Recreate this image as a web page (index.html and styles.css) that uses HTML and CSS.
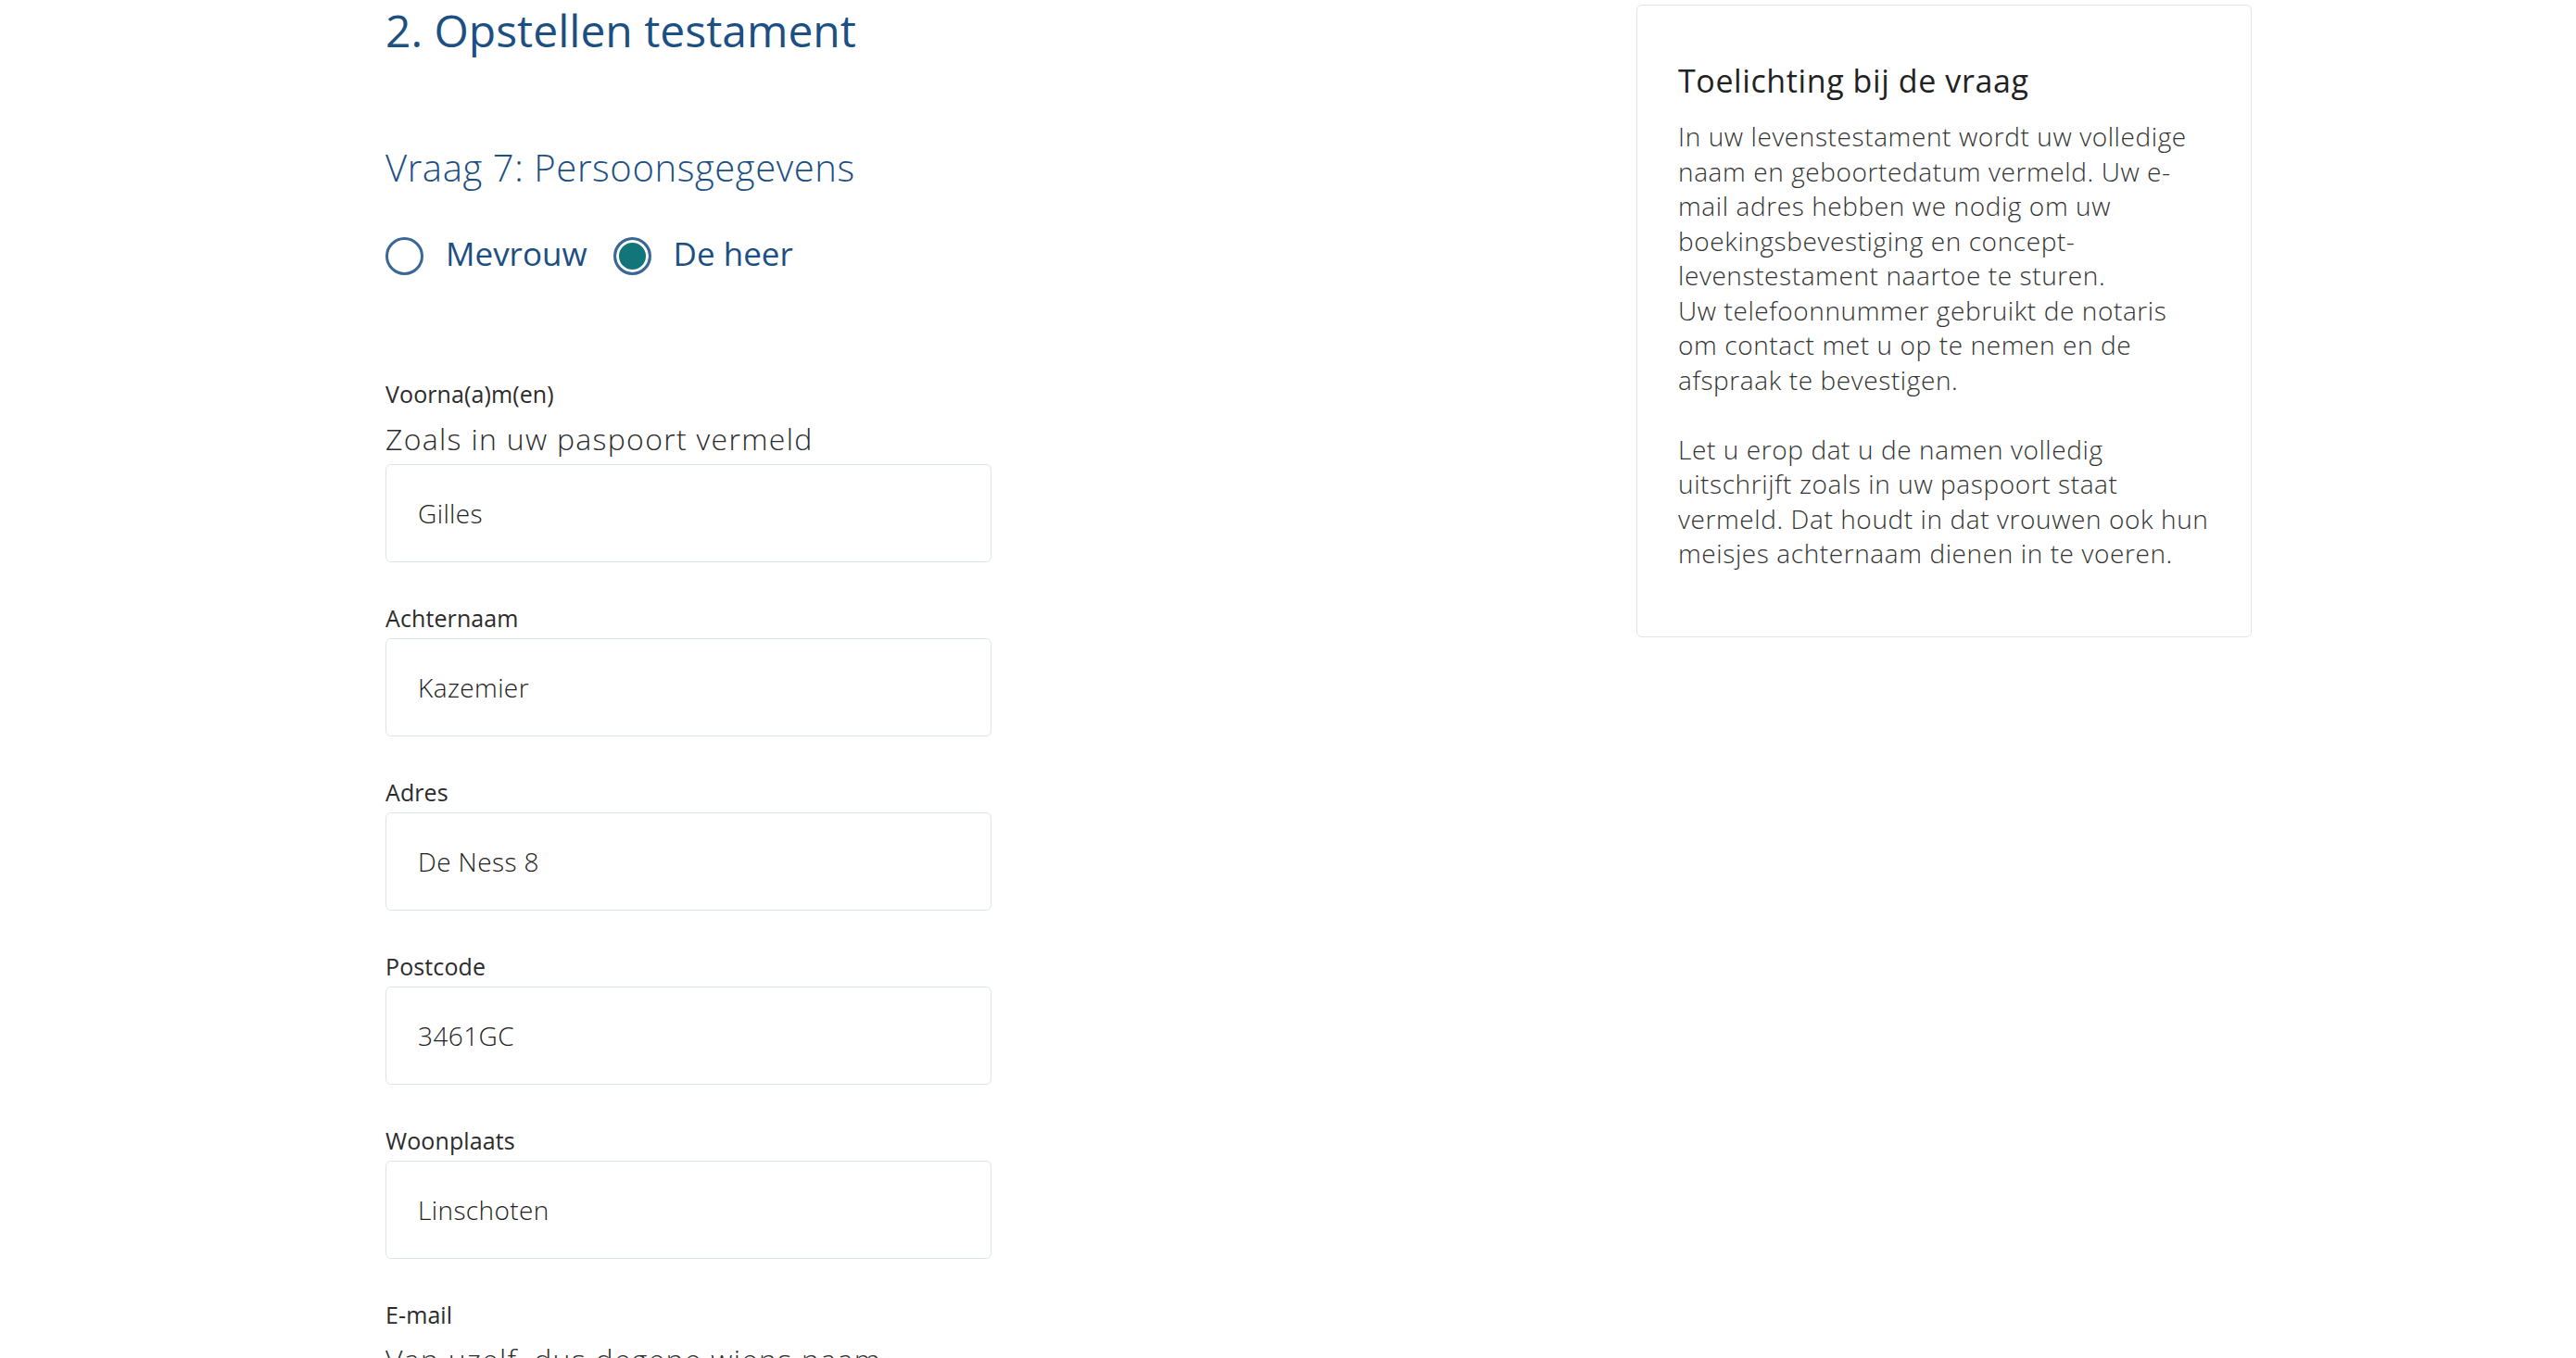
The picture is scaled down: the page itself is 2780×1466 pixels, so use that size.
FILE: index.html
```html
<!DOCTYPE html>
<html lang="nl">
<head>
<meta charset="utf-8">
<title>Opstellen testament</title>
<link rel="stylesheet" href="styles.css">
</head>
<body>
<div class="page">
  <main class="form-col">
    <h1 class="step-title">2. Opstellen testament</h1>
    <h2 class="question">Vraag 7: Persoonsgegevens</h2>
    <div class="radio-group">
      <label class="radio"><span class="radio-dot"></span><span class="radio-text">Mevrouw</span></label>
      <label class="radio is-checked"><span class="radio-dot"></span><span class="radio-text">De heer</span></label>
    </div>
    <div class="fields">
      <div class="field">
        <label class="field-label">Voorna(a)m(en)</label>
        <p class="field-hint">Zoals in uw paspoort vermeld</p>
        <input class="field-input" type="text" value="Gilles" readonly>
      </div>
      <div class="field">
        <label class="field-label">Achternaam</label>
        <input class="field-input" type="text" value="Kazemier" readonly>
      </div>
      <div class="field">
        <label class="field-label">Adres</label>
        <input class="field-input" type="text" value="De Ness 8" readonly>
      </div>
      <div class="field">
        <label class="field-label">Postcode</label>
        <input class="field-input" type="text" value="3461GC" readonly>
      </div>
      <div class="field">
        <label class="field-label">Woonplaats</label>
        <input class="field-input" type="text" value="Linschoten" readonly>
      </div>
      <div class="field">
        <label class="field-label">E-mail</label>
        <p class="field-hint">Van uzelf, dus degene wiens naam</p>
        <input class="field-input" type="text" value="" readonly>
      </div>
    </div>
  </main>
  <aside class="help-panel">
    <h3 class="help-title">Toelichting bij de vraag</h3>
    <p class="help-text">In uw levenstestament wordt uw volledige naam en geboortedatum vermeld. Uw e-mail adres hebben we nodig om uw boekingsbevestiging en concept-levenstestament naartoe te sturen.<br>Uw telefoonnummer gebruikt de notaris om contact met u op te nemen en de afspraak te bevestigen.<br><br>Let u erop dat u de namen volledig uitschrijft zoals in uw paspoort staat vermeld. Dat houdt in dat vrouwen ook hun meisjes achternaam dienen in te voeren.</p>
  </aside>
</div>
</body>
</html>
```
FILE: styles.css
```css
html, body {
  margin: 0;
  padding: 0;
  overflow: hidden;
  background: #ffffff;
}

body {
  font-family: "Open Sans", "Lato", sans-serif;
  color: #333333;
}

.page {
  display: grid;
  grid-template-columns: 1350px 664px;
  align-items: start;
  padding: 5px 0 0 416px;
}

.step-title {
  margin: 0;
  font-size: 48px;
  line-height: 56px;
  font-weight: 500;
  color: #1c4f82;
}

.question {
  margin: 96px 0 0;
  font-size: 40px;
  line-height: 48px;
  font-weight: 300;
  letter-spacing: 0.6px;
  color: #1c4f82;
}

.radio-group {
  display: flex;
  gap: 28px;
  margin-top: 48px;
}

.radio {
  display: flex;
  align-items: center;
  gap: 24px;
}

.radio-dot {
  box-sizing: border-box;
  width: 41px;
  height: 41px;
  border: 3px solid #3a6796;
  border-radius: 50%;
  background: #ffffff;
}

.is-checked .radio-dot {
  background: #12757a;
  box-shadow: inset 0 0 0 3px #ffffff;
}

.radio-text {
  font-size: 35px;
  line-height: 41px;
  font-weight: 500;
  color: #1c4f82;
  margin-bottom: 5px;
}

.fields {
  margin-top: 111px;
}

.field + .field {
  margin-top: 45px;
}

.field-label {
  display: block;
  margin-bottom: 7px;
  font-size: 25px;
  line-height: 30px;
  font-weight: 400;
  letter-spacing: 0.1px;
  color: #2b2b2b;
}

.field-hint {
  margin: 14px 0 7px;
  font-size: 32px;
  line-height: 40px;
  font-weight: 300;
  letter-spacing: 1.3px;
  color: #2b2b2b;
}

.field-input {
  display: block;
  box-sizing: border-box;
  width: 654px;
  height: 106px;
  margin: 0;
  padding: 0 34px;
  border: 1px solid #dde4ec;
  border-radius: 6px;
  background: #ffffff;
  font-family: "Open Sans", "Lato", sans-serif;
  font-size: 28px;
  font-weight: 300;
  letter-spacing: 0.4px;
  color: #222222;
  outline: none;
}

.help-panel {
  box-sizing: border-box;
  width: 664px;
  padding: 61px 42px 70px 44px;
  border: 1px solid #dfe5eb;
  border-radius: 6px;
}

.help-title {
  margin: 0 0 21px;
  font-size: 34px;
  line-height: 41px;
  font-weight: 500;
  letter-spacing: 0.6px;
  color: #222222;
}

.help-text {
  margin: 0;
  font-size: 28px;
  line-height: 37.5px;
  font-weight: 300;
  letter-spacing: 0.6px;
  color: #333333;
}
```
